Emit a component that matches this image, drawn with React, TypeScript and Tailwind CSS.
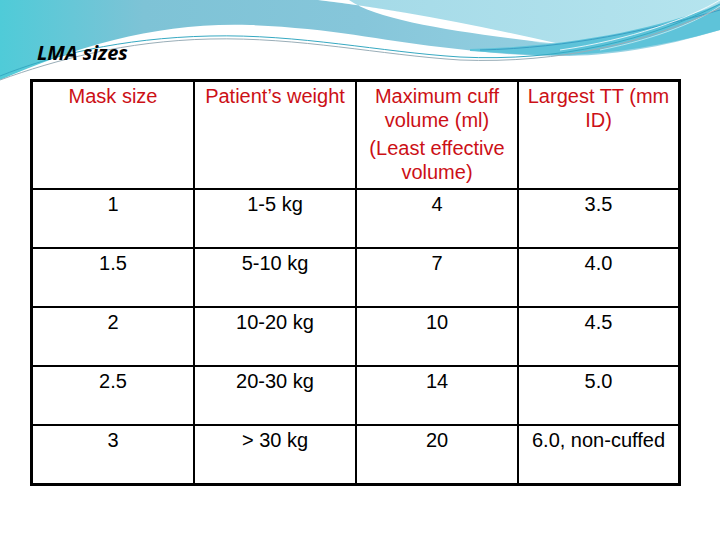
import React from "react"

const rows = [
  ["1", "1-5 kg", "4", "3.5"],
  ["1.5", "5-10 kg", "7", "4.0"],
  ["2", "10-20 kg", "10", "4.5"],
  ["2.5", "20-30 kg", "14", "5.0"],
  ["3", "> 30 kg", "20", "6.0, non-cuffed"],
]

// decorative wave band at the top of the slide
const Waves = () => (
  <svg className="absolute left-0 top-0" width="720" height="90" viewBox="0 0 720 90">
    <defs>
      <linearGradient id="base" x1="0" y1="0" x2="1" y2="0">
        <stop offset="0" stopColor="#4fcbd8" />
        <stop offset="0.2" stopColor="#7ec3d6" />
        <stop offset="0.5" stopColor="#86c6da" />
        <stop offset="1" stopColor="#9fd7e6" />
      </linearGradient>
      <linearGradient id="light" x1="0" y1="0" x2="1" y2="0">
        <stop offset="0" stopColor="#a3d9e7" />
        <stop offset="1" stopColor="#b5e4ee" />
      </linearGradient>
    </defs>
    <path
      d="M0,0 H720 V30 C660,48 610,56 560,56 C520,56 480,52 440,47 C380,40 330,28 250,25 C160,22 80,45 0,80 Z"
      fill="url(#base)"
    />
    <path d="M318,0 Q420,12 540,43 C600,45 670,30 720,2 V0 Z" fill="url(#light)" />
    <path d="M318,0 Q420,12 560,44 C470,34 380,22 349,0 Z" fill="#ffffff" />
    <path d="M470,49 C560,47 650,32 720,4 V30 C650,50 590,56 540,55 C510,54 490,52 470,51 Z" fill="#5ec3d9" />
    <path d="M480,50 C570,48 650,30 720,10" stroke="#3a9fc4" strokeWidth="1" fill="none" />
    <path d="M560,50 C630,40 690,18 720,0" stroke="#ffffff" strokeWidth="1" fill="none" opacity="0.8" />
    <path d="M600,50 C660,38 700,20 720,6" stroke="#ffffff" strokeWidth="0.8" fill="none" opacity="0.7" />
    <path d="M0,76 C50,56 120,38 210,36 C300,34 380,52 460,57 C560,62 650,40 720,4" stroke="#36a9c2" strokeWidth="1" fill="none" />
    <path d="M0,80 C55,60 125,41 210,39 C300,37 380,55 460,60 C560,64 650,42 720,8" stroke="#9aaeb8" strokeWidth="1" fill="none" />
  </svg>
)

export default function App() {
  return (
    <div className="relative w-[720px] h-[540px] bg-white overflow-hidden">
      <Waves />
      <div className="relative">
        <h1 className="pl-[37px] pt-[39px] text-[20px] leading-[28px] font-bold italic text-black font-['Open_Sans',sans-serif]">
          LMA sizes
        </h1>

        <div className="ml-[30px] mt-[12px] w-[651px] border-[3px] border-black font-['Liberation_Sans',Arial,sans-serif] text-[20px] leading-[24px] text-center">
          {/* header */}
          <div className="grid grid-cols-[160px_162px_162px_161px] h-[106px] text-[#cc1016]">
            <div className="pt-[2px] px-[4px]">Mask size</div>
            <div className="pt-[2px] px-[4px] border-l-2 border-black">Patient’s weight</div>
            <div className="pt-[2px] px-[4px] border-l-2 border-black">
              <p>Maximum cuff volume (ml)</p>
              <p className="mt-[4px]">(Least effective volume)</p>
            </div>
            <div className="pt-[2px] px-[6px] border-l-2 border-black">Largest TT (mm ID)</div>
          </div>

          {rows.map((r) => (
            <div key={r[0]} className="grid grid-cols-[160px_162px_162px_161px] h-[59px] border-t-2 border-black text-black">
              <div className="pt-[2px]">{r[0]}</div>
              <div className="pt-[2px] border-l-2 border-black">{r[1]}</div>
              <div className="pt-[2px] border-l-2 border-black">{r[2]}</div>
              <div className="pt-[2px] border-l-2 border-black">{r[3]}</div>
            </div>
          ))}
        </div>
      </div>
    </div>
  )
}
